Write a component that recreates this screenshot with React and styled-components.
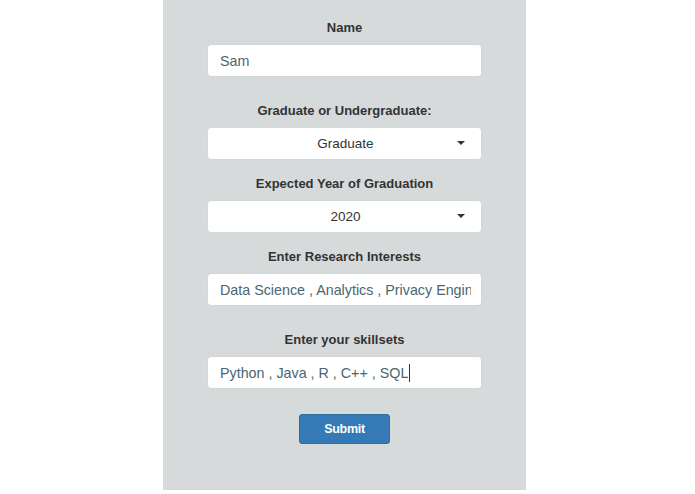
import styled, { createGlobalStyle } from 'styled-components'

const Global = createGlobalStyle`
  html, body {
    margin: 0;
    padding: 0;
    background: #ffffff;
    font-family: "Liberation Sans", Arial, sans-serif;
  }
`

const Page = styled.div`
  height: 494px;
  padding-left: 163px;
`

const Panel = styled.form`
  width: 363px;
  height: 490px;
  background: #d7dadb;
  display: flex;
  flex-direction: column;
  align-items: center;
  padding-top: 20px;
  box-sizing: border-box;
`

const Label = styled.label`
  font-size: 13px;
  font-weight: bold;
  color: #333333;
  line-height: 16px;
  margin-bottom: 9px;
`

const Field = styled.div`
  width: 273px;
  height: 31px;
  box-sizing: border-box;
  background: #ffffff;
  border-radius: 3px;
  box-shadow: 0 0 1px rgba(0, 0, 0, 0.15);
  display: flex;
  align-items: center;
  padding: 0 10px 0 12px;
  margin-bottom: ${(p) => p.$gap}px;
  position: relative;
`

const FieldText = styled.span`
  font-size: 14.3px;
  color: #4b6670;
  white-space: nowrap;
  overflow: hidden;
`

const Caret = styled.span`
  width: 1px;
  height: 18px;
  background: #333;
  margin-left: 1px;
`

const Select = styled(Field)`
  justify-content: center;
`

const SelectText = styled.span`
  font-size: 13.5px;
  color: #333333;
`

const Arrow = styled.span`
  position: absolute;
  right: 16px;
  top: 13px;
  width: 0;
  height: 0;
  border-left: 4px solid transparent;
  border-right: 4px solid transparent;
  border-top: 4px solid #333;
`

const Button = styled.button`
  margin-top: ${(p) => p.$top}px;
  width: 91px;
  height: 30px;
  background: #337ab7;
  border: 1px solid #2e6da4;
  border-radius: 3px;
  color: #ffffff;
  font-family: "Liberation Sans", Arial, sans-serif;
  font-weight: bold;
  font-size: 12.5px;
  letter-spacing: -0.3px;
`

const App = () => {
  return (
    <Page>
      <Global />
      <Panel>
        <Label>Name</Label>
        <Field $gap={27}>
          <FieldText>Sam</FieldText>
        </Field>
        <Label>Graduate or Undergraduate:</Label>
        <Select $gap={17}>
          <SelectText>Graduate</SelectText>
          <Arrow />
        </Select>
        <Label>Expected Year of Graduation</Label>
        <Select $gap={17}>
          <SelectText>2020</SelectText>
          <Arrow />
        </Select>
        <Label>Enter Research Interests</Label>
        <Field $gap={27}>
          <FieldText>Data Science , Analytics , Privacy Engineering</FieldText>
        </Field>
        <Label>Enter your skillsets</Label>
        <Field $gap={0}>
          <FieldText>Python , Java , R , C++ , SQL</FieldText>
          <Caret />
        </Field>
        <Button type="button" $top={26}>Submit</Button>
      </Panel>
    </Page>
  )
}

export default App
